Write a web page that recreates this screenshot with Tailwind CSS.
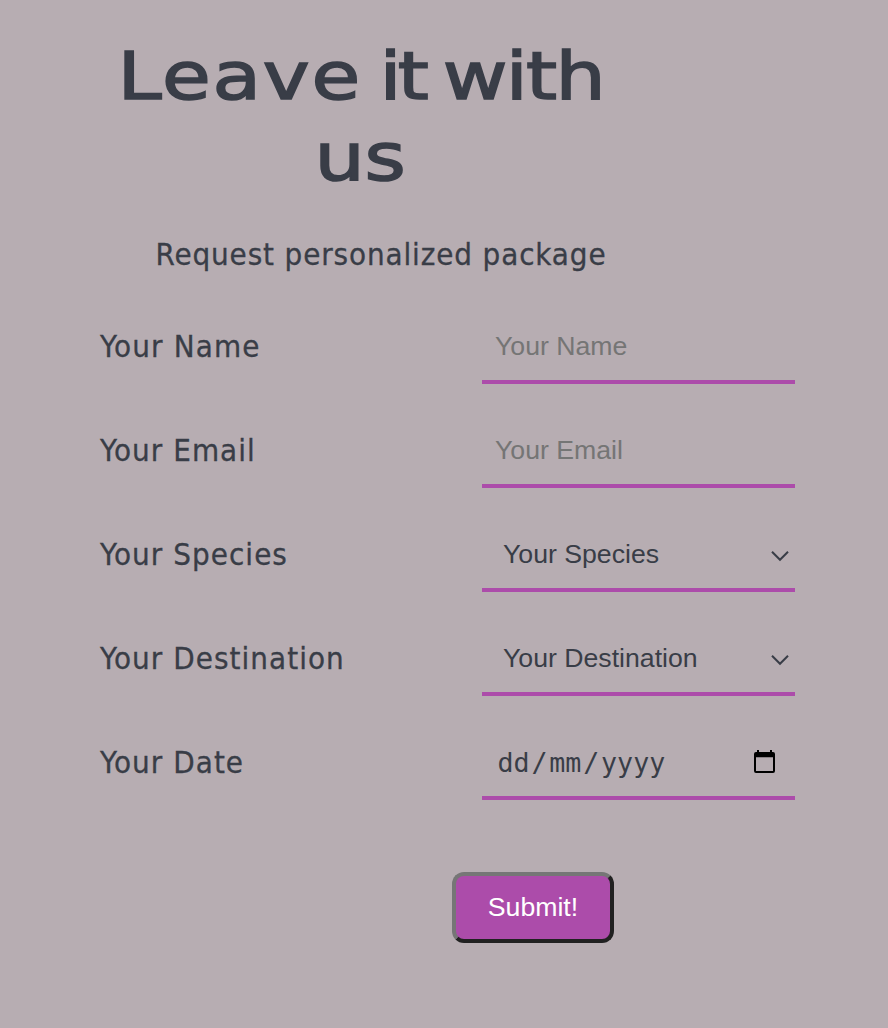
<!DOCTYPE html>
<html lang="en">
<head>
<meta charset="utf-8">
<title>Leave it with us</title>
<script src="https://cdn.jsdelivr.net/npm/@tailwindcss/browser@4"></script>
</head>
<body class="bg-[#b7adb2] text-[#393d47]">
<main class="w-[888px] h-[1028px] overflow-hidden pt-9 pl-[100px]">
  <h1 class="w-[521px] flex flex-col items-center whitespace-nowrap font-['DejaVu_Sans',sans-serif] text-[66px] leading-[81px] [-webkit-text-stroke:1.6px_#393d47]">
    <span class="block scale-x-120 [word-spacing:-6.5px]"><span class="tracking-[1.5px]">Leave</span> <span class="tracking-[-3px]">it</span> <span class="tracking-[-1.4px]">with</span></span>
    <span class="block scale-x-120">us</span>
  </h1>
  <p class="mt-9 w-[562px] text-center whitespace-nowrap font-['DejaVu_Sans_Condensed','DejaVu_Sans',sans-serif] text-[31px] leading-10 tracking-[0.88px] [-webkit-text-stroke:0.3px_#393d47]">Request personalized package</p>
  <form class="mt-[34px] flex flex-col">
    <div class="grid grid-cols-[382px_313px] gap-y-7 font-['Liberation_Sans',Arial,sans-serif] text-[26.67px]">
      <label class="h-[76px] leading-[76px] font-['DejaVu_Sans_Condensed','DejaVu_Sans',sans-serif] text-[31px] tracking-[1.15px] [-webkit-text-stroke:0.3px_#393d47]">Your Name</label>
      <input class="h-[76px] border-b-4 border-[#ac4caa] pl-[13px] pt-1 outline-none placeholder:text-[#757575]" placeholder="Your Name">
      <label class="h-[76px] leading-[76px] font-['DejaVu_Sans_Condensed','DejaVu_Sans',sans-serif] text-[31px] tracking-[1.05px] [-webkit-text-stroke:0.3px_#393d47]">Your Email</label>
      <input class="h-[76px] border-b-4 border-[#ac4caa] pl-[13px] pt-1 outline-none placeholder:text-[#757575]" placeholder="Your Email">
      <label class="h-[76px] leading-[76px] font-['DejaVu_Sans_Condensed','DejaVu_Sans',sans-serif] text-[31px] tracking-[1.05px] [-webkit-text-stroke:0.3px_#393d47]">Your Species</label>
      <div class="h-[76px] border-b-4 border-[#ac4caa] pl-[21px] pr-1.5 pt-1 flex items-center justify-between">
        <span>Your Species</span>
        <svg class="mt-1" width="18" height="12" viewBox="0 0 18 12" fill="none" stroke="#393d47" stroke-width="2"><path d="M1 1.7 9 9.8 17 1.7"/></svg>
      </div>
      <label class="h-[76px] leading-[76px] font-['DejaVu_Sans_Condensed','DejaVu_Sans',sans-serif] text-[31px] tracking-[1.05px] [-webkit-text-stroke:0.3px_#393d47]">Your Destination</label>
      <div class="h-[76px] border-b-4 border-[#ac4caa] pl-[21px] pr-1.5 pt-1 flex items-center justify-between">
        <span>Your Destination</span>
        <svg class="mt-1" width="18" height="12" viewBox="0 0 18 12" fill="none" stroke="#393d47" stroke-width="2"><path d="M1 1.7 9 9.8 17 1.7"/></svg>
      </div>
      <label class="h-[76px] leading-[76px] font-['DejaVu_Sans_Condensed','DejaVu_Sans',sans-serif] text-[31px] tracking-[1.05px] [-webkit-text-stroke:0.3px_#393d47]">Your Date</label>
      <div class="h-[76px] border-b-4 border-[#ac4caa] pl-[15.5px] pr-5 pt-1 flex items-center justify-between">
        <span class="flex pt-0.5 font-['DejaVu_Sans_Mono',monospace]"><span>dd</span><span class="px-[1.8px]">/</span><span>mm</span><span class="px-[1.8px]">/</span><span>yyyy</span></span>
        <svg class="mb-0.5" width="21" height="23" viewBox="0 0 21 23"><path fill="#000" fill-rule="evenodd" d="M3 0h2v2h11V0h2v2h1a2 2 0 0 1 2 2v17a2 2 0 0 1-2 2H2a2 2 0 0 1-2-2V4a2 2 0 0 1 2-2h1zM2 7.3V21h17V7.3z"/></svg>
      </div>
    </div>
    <button type="button" class="mt-[72px] ml-[352px] pb-0.5 w-[162px] h-[71px] rounded-xl border-4 border-t-[#767676] border-l-[#767676] border-r-[#212121] border-b-[#212121] bg-[#ac4caa] text-white font-['Liberation_Sans',Arial,sans-serif] text-[26.67px]">Submit!</button>
  </form>
</main>
</body>
</html>
